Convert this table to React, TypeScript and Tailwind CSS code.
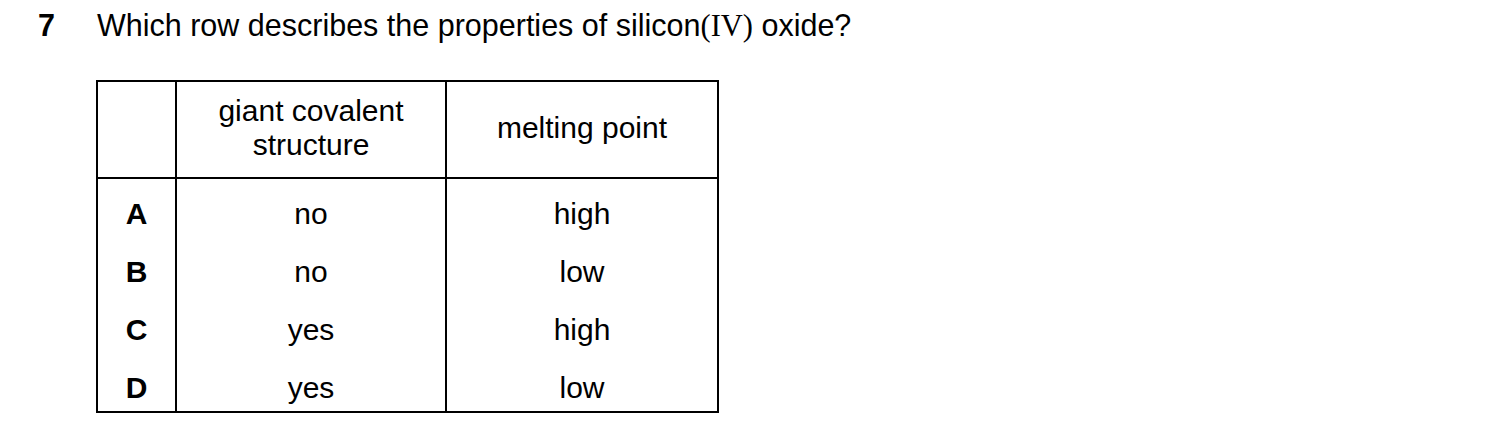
export default function App() {
  const rows = [
    { key: "A", structure: "no", mp: "high" },
    { key: "B", structure: "no", mp: "low" },
    { key: "C", structure: "yes", mp: "high" },
    { key: "D", structure: "yes", mp: "low" },
  ];

  const rowClass = (i: number) =>
    i === 0
      ? "grid-rows-[64px]"
      : i === rows.length - 1
      ? "grid-rows-[52px]"
      : "grid-rows-[58px]";

  const cellPad = (i: number) => (i === 0 ? "pt-[6px]" : "");

  return (
    <div className="min-h-screen w-full bg-white text-black font-['Liberation_Sans',Arial,sans-serif]">
      {/* Question */}
      <div className="flex h-[43px] pt-[7px] pl-[38px] text-[30.5px] leading-[36px]">
        <span className="w-[59px] font-bold">7</span>
        <p>
          Which row describes the properties of silicon
          <span className="leading-none font-['Liberation_Serif','Times_New_Roman',serif]">(IV)</span> oxide?
        </p>
      </div>

      {/* Answer table */}
      <div className="ml-[96px] mt-[37px] w-[623px] border-2 border-black text-[30px]">
        <div className="grid grid-cols-[79px_270px_270px] h-[97px] border-b-2 border-black">
          <div className="border-r-2 border-black" />
          <div className="border-r-2 border-black flex flex-col items-center justify-center pb-[4px] leading-[34px]">
            <span>giant covalent</span>
            <span>structure</span>
          </div>
          <div className="flex items-center justify-center pb-[4px] leading-[34px]">melting point</div>
        </div>

        {rows.map((r, i) => (
          <div key={r.key} className={`grid grid-cols-[79px_270px_270px] ${rowClass(i)}`}>
            <div className={`border-r-2 border-black text-center font-bold leading-[58px] ${cellPad(i)}`}>{r.key}</div>
            <div className={`border-r-2 border-black text-center leading-[58px] ${cellPad(i)}`}>{r.structure}</div>
            <div className={`text-center leading-[58px] ${cellPad(i)}`}>{r.mp}</div>
          </div>
        ))}
      </div>
    </div>
  );
}
